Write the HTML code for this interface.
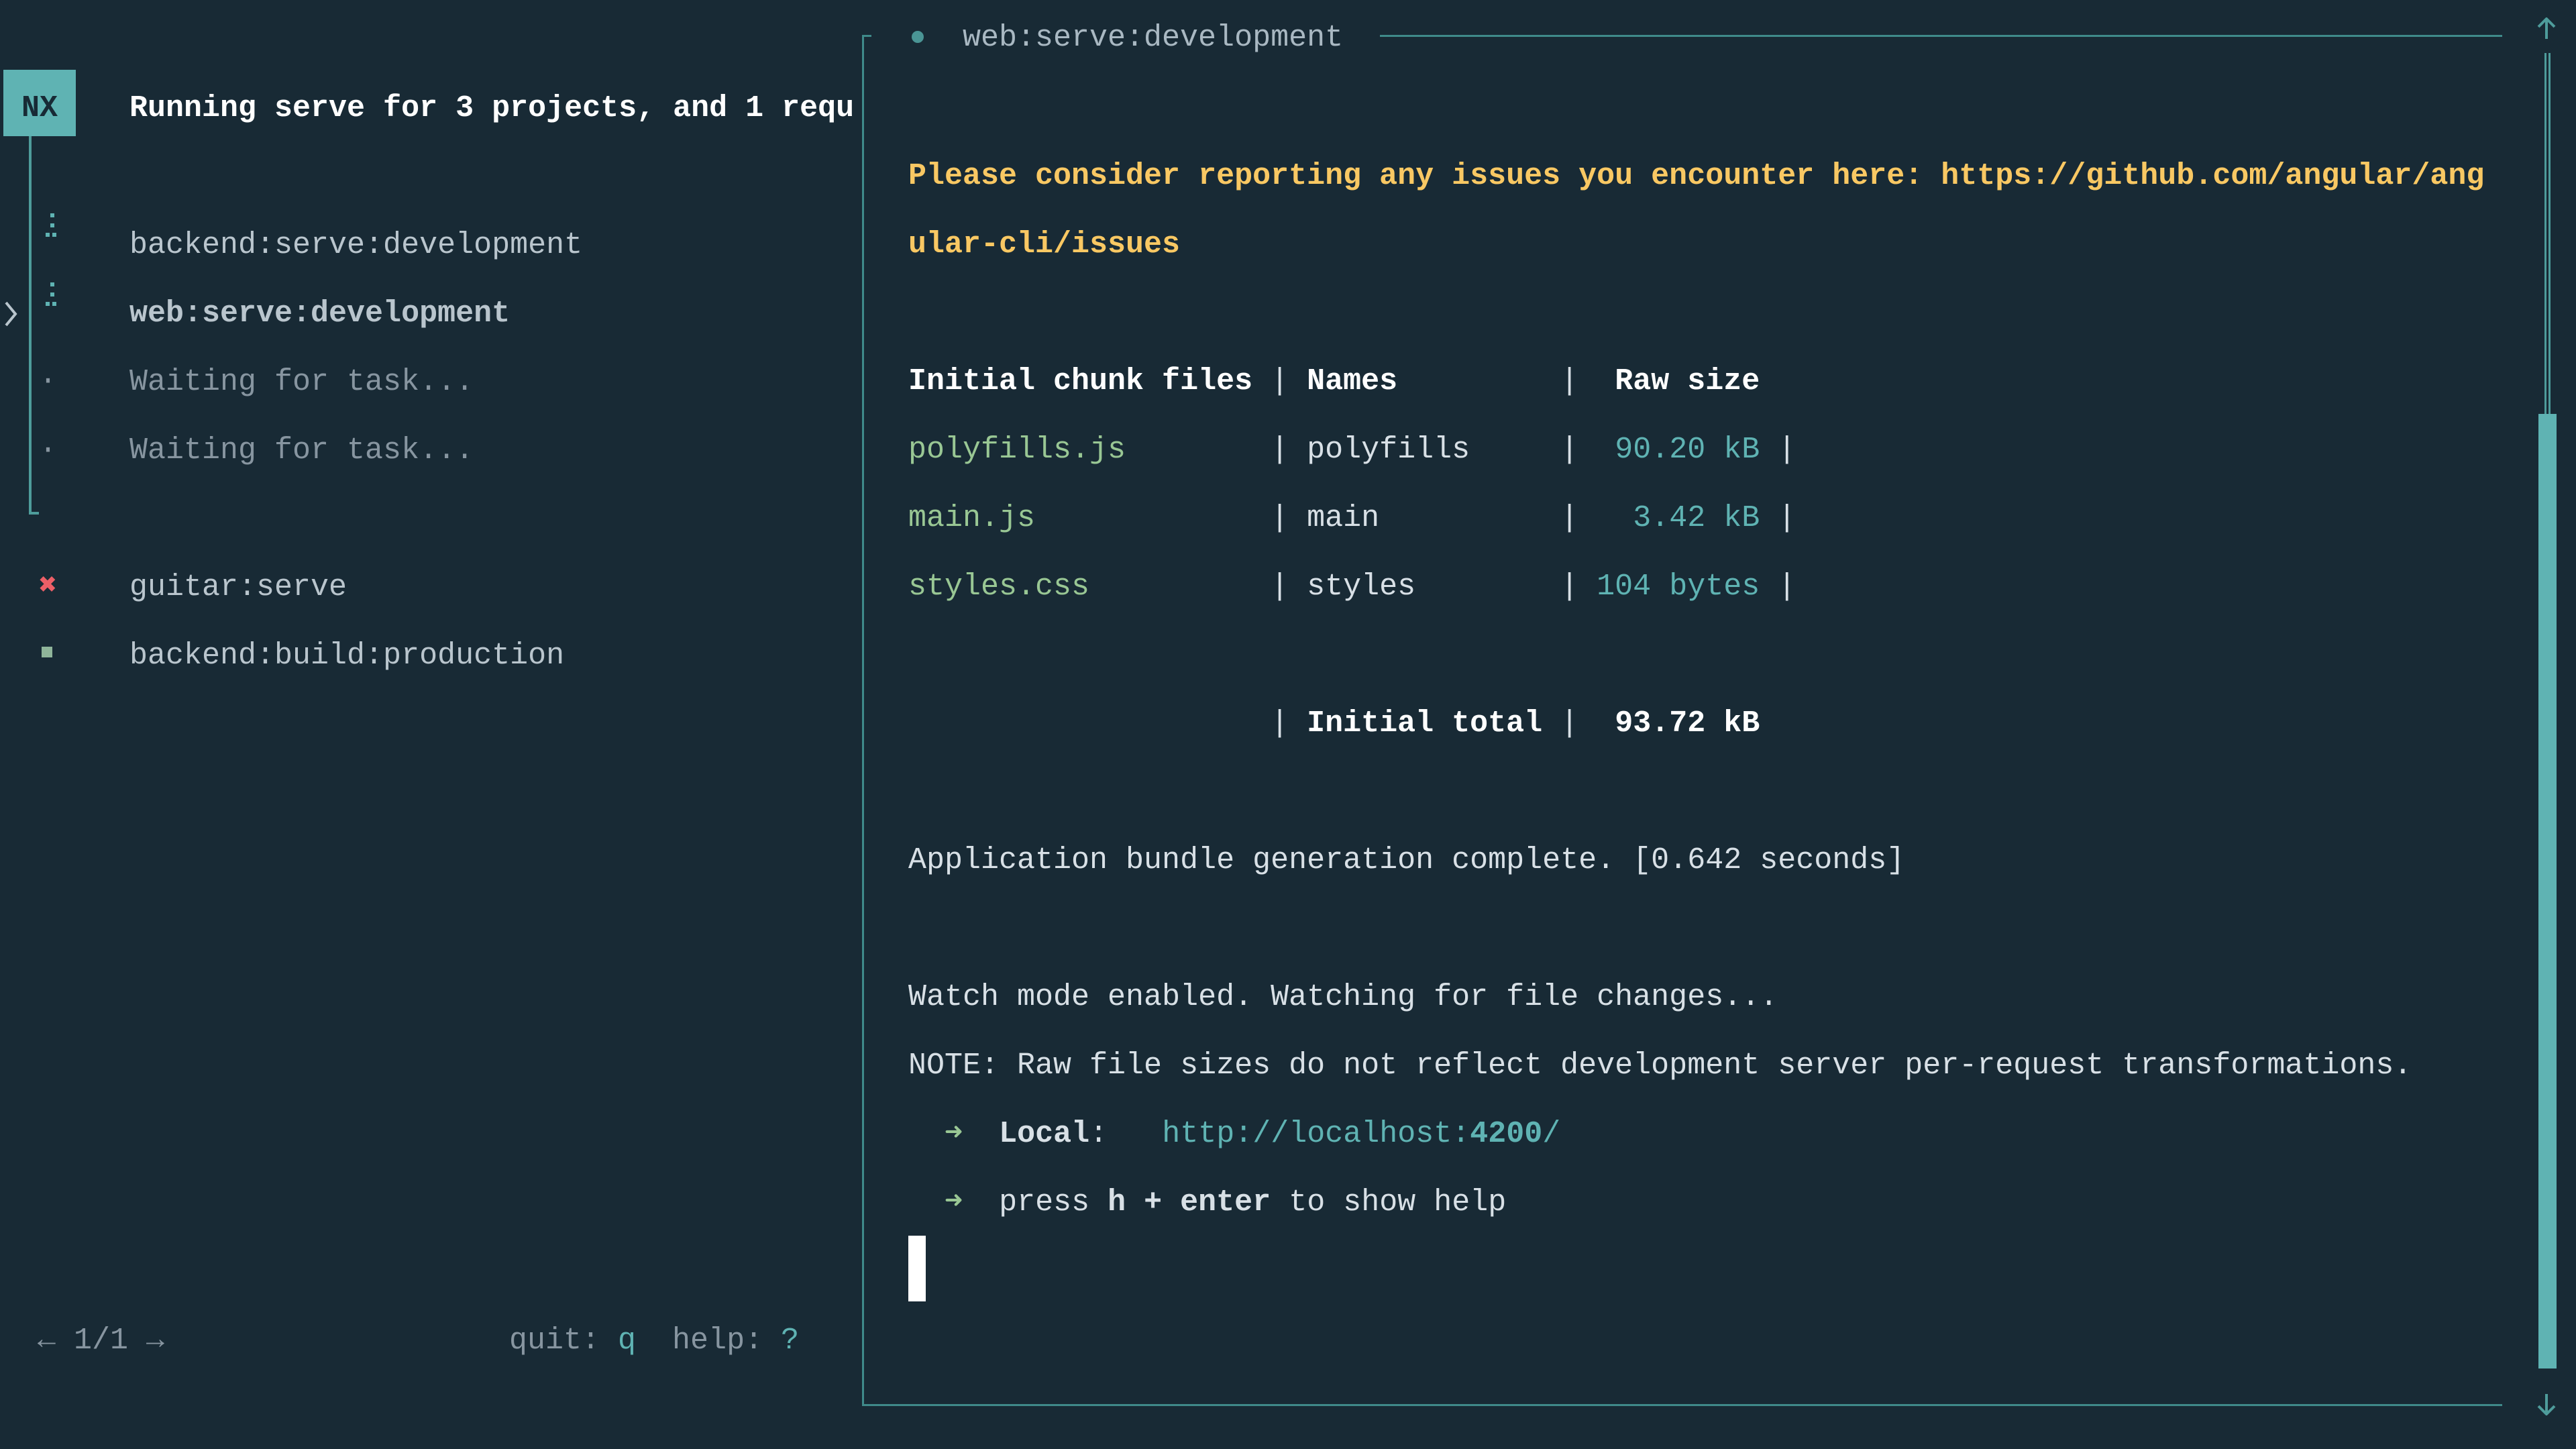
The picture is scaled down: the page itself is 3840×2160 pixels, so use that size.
<!DOCTYPE html>
<html><head><meta charset="utf-8"><style>
html,body{margin:0;padding:0;width:3840px;height:2160px;background:#182a35;overflow:hidden}
*{box-sizing:border-box}
.m{font-family:"Liberation Mono","DejaVu Sans Mono",monospace;font-size:45px;line-height:102px;white-space:pre;margin:0;position:absolute;color:#d8e0e6}
.b{font-weight:bold}
.w{color:#ffffff}
.g{color:#8795a0}
.t{color:#5fb3b3}
.y{color:#f9c863}
.gr{color:#99c794}
.r{color:#ec5f67}
.lt{color:#b9c5cd}
.d{position:absolute;width:6px;height:6px;background:#5fb3b3}
</style></head><body>
<div style="position:absolute;left:5px;top:104px;width:108px;height:99px;background:#5fb3b3"></div>
<div class="m b" style="left:32px;top:111px;color:#182a35">NX</div>
<div style="position:absolute;left:43px;top:203px;width:4px;height:564px;background:#4e9c9b"></div>
<div style="position:absolute;left:43px;top:763px;width:15px;height:4px;background:#4e9c9b"></div>
<div class="m" style="left:193px;top:111px;width:1081px;overflow:hidden"><span class="b w">Running serve for 3 projects, and 1 requ</span>

<span class="lt">backend:serve:development</span>
<span class="b lt">web:serve:development</span>
<span class="g">Waiting for task...</span>
<span class="g">Waiting for task...</span>

<span class="lt">guitar:serve</span>
<span class="lt">backend:build:production</span></div>
<!-- spinners -->
<div class="d" style="left:75px;top:318px"></div><div class="d" style="left:75px;top:333px"></div><div class="d" style="left:68px;top:347px"></div><div class="d" style="left:78px;top:347px"></div>
<div class="d" style="left:75px;top:421px"></div><div class="d" style="left:75px;top:436px"></div><div class="d" style="left:68px;top:450px"></div><div class="d" style="left:78px;top:450px"></div>
<svg style="position:absolute;left:4px;top:448px" width="24" height="40"><path d="M5 3 L19 20 L5 37" stroke="#b9c5cd" stroke-width="4" fill="none"/></svg>
<div class="m g" style="left:58px;top:518px">·</div>
<div class="m g" style="left:58px;top:621px">·</div>
<div class="m r b" style="left:58px;top:824px">✖</div>
<div style="position:absolute;left:62px;top:964px;width:16px;height:16px;background:#8fb59a"></div>
<div class="m g" style="left:56px;top:1948px">← 1/1 →</div>
<div class="m g" style="left:759px;top:1948px">quit: <span class="t">q</span>  help: <span class="t">?</span></div>
<div style="position:absolute;left:1285px;top:52px;width:3px;height:2044px;background:#3f8a8a"></div>
<div style="position:absolute;left:1285px;top:52px;width:14px;height:3px;background:#3f8a8a"></div>
<div style="position:absolute;left:2057px;top:52px;width:1673px;height:3px;background:#3f8a8a"></div>
<div style="position:absolute;left:1285px;top:2093px;width:2445px;height:3px;background:#3f8a8a"></div>
<div style="position:absolute;left:1359px;top:46px;width:18px;height:18px;border-radius:50%;background:#4a9595"></div>
<div class="m" style="left:1435px;top:6px;color:#a9b8c2">web:serve:development</div>
<svg style="position:absolute;left:3780px;top:26px" width="32" height="34"><path d="M16 2 V32 M4 14 L16 2 L28 14" stroke="#4e9c9b" stroke-width="4" fill="none"/></svg>
<svg style="position:absolute;left:3780px;top:2076px" width="32" height="34"><path d="M16 2 V32 M4 20 L16 32 L28 20" stroke="#4e9c9b" stroke-width="4" fill="none"/></svg>
<div style="position:absolute;left:3793px;top:79px;width:3px;height:1960px;background:#4e9c9b"></div>
<div style="position:absolute;left:3799px;top:79px;width:3px;height:1960px;background:#4e9c9b"></div>
<div style="position:absolute;left:3784px;top:617px;width:27px;height:1423px;background:#5fb3b3"></div>
<div class="m" style="left:1354px;top:212px"><span class="y b">Please consider reporting any issues you encounter here: https://github.com/angular/ang</span>
<span class="y b">ular-cli/issues</span>

<span class="b w">Initial chunk files</span> | <span class="b w">Names</span>         |  <span class="b w">Raw size</span>
<span class="gr">polyfills.js</span>        | polyfills     |  <span class="t">90.20 kB</span> |
<span class="gr">main.js</span>             | main          |   <span class="t">3.42 kB</span> |
<span class="gr">styles.css</span>          | styles        | <span class="t">104 bytes</span> |

                    | <span class="b w">Initial total</span> |  <span class="b w">93.72 kB</span>

Application bundle generation complete. [0.642 seconds]

Watch mode enabled. Watching for file changes...
NOTE: Raw file sizes do not reflect development server per-request transformations.
  <span class="gr b">➜</span>  <span class="b">Local</span>:   <span class="t">http://localhost:<span class="b">4200</span>/</span>
  <span class="gr b">➜</span>  press <span class="b">h + enter</span> to show help</div>
<div style="position:absolute;left:1354px;top:1842px;width:26px;height:98px;background:#ffffff"></div>
</body></html>
